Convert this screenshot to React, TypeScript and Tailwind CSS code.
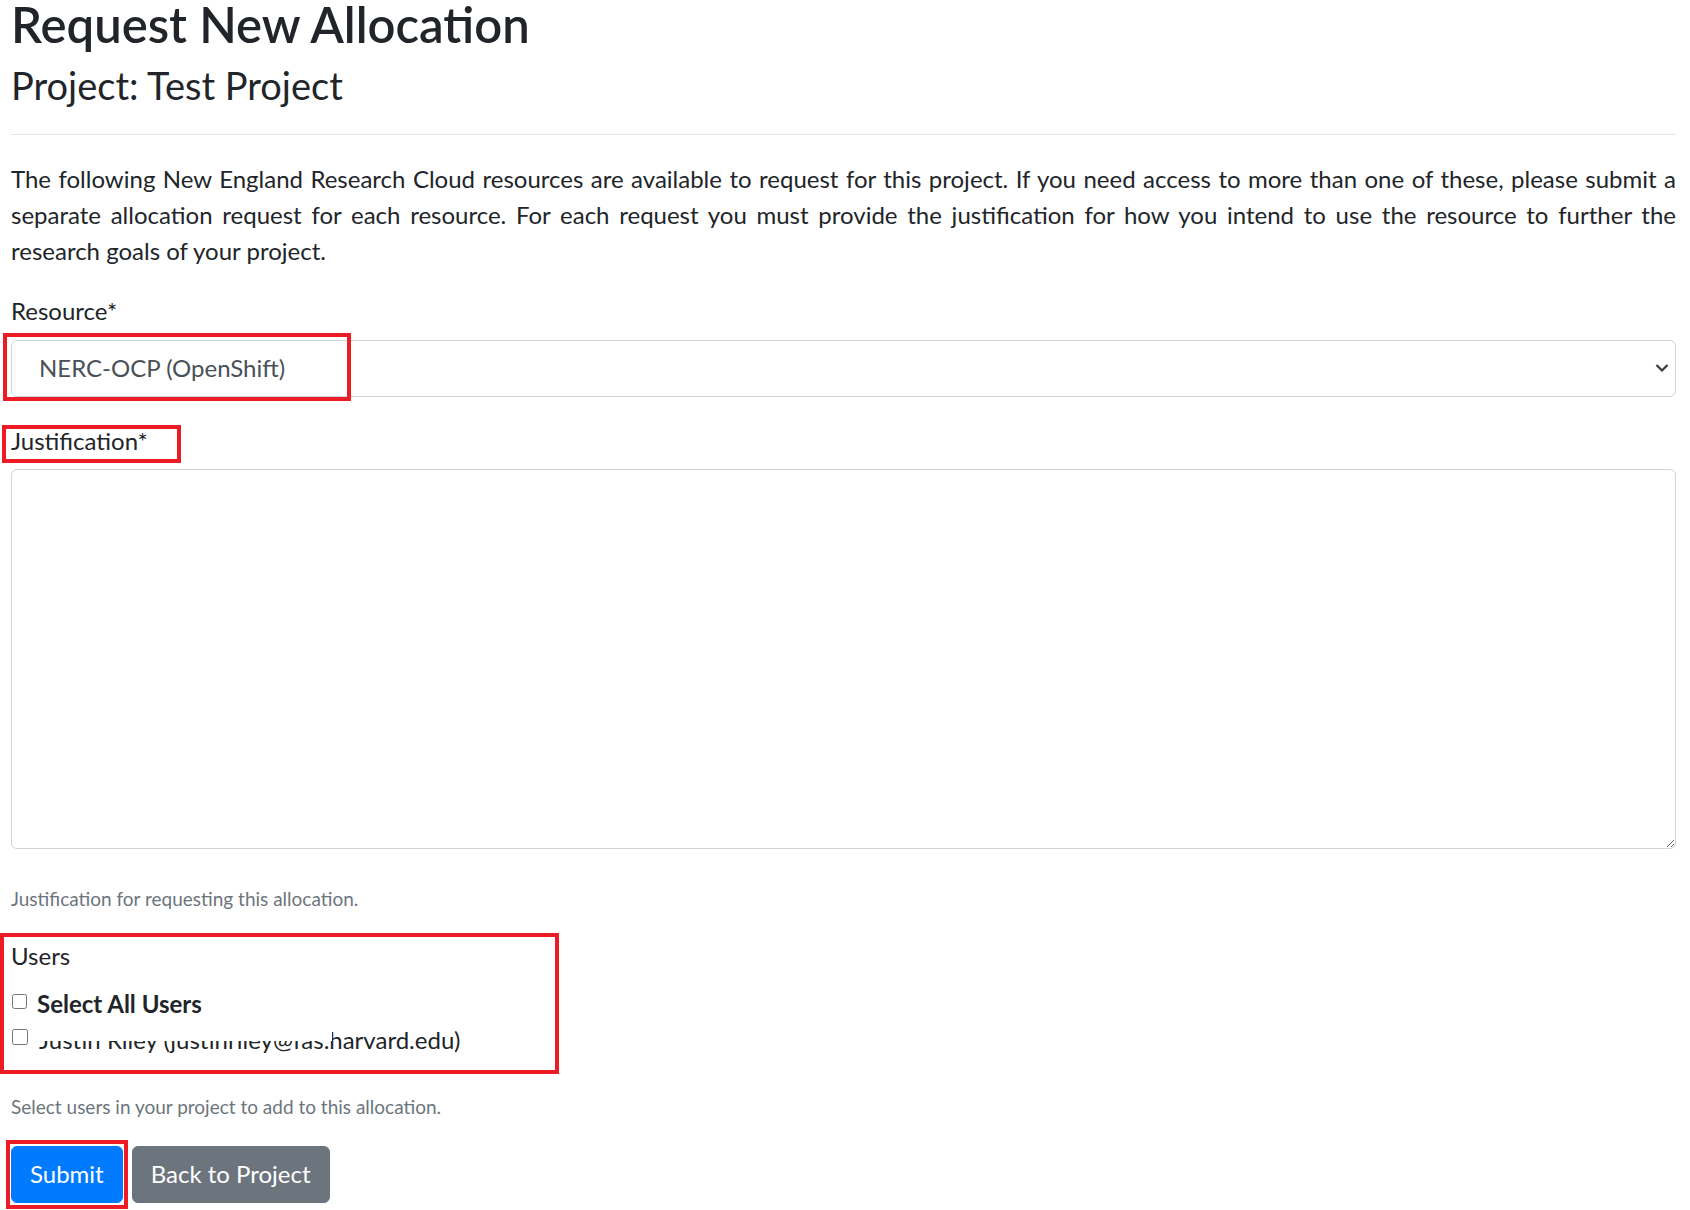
import React from 'react';

const lines = [
  'The following New England Research Cloud resources are available to request for this project. If you need access to more than one of these, please submit a',
  'separate allocation request for each resource. For each request you must provide the justification for how you intend to use the resource to further the',
];

function RedBox({ className }: { className: string }) {
  return <div className={`absolute border-[4px] border-[#ed1c24] pointer-events-none ${className}`} />;
}

export default function App() {
  return (
    <div className="bg-white min-h-[1210px] overflow-hidden pl-[11px] pr-[14px] text-[#212529] font-['Lato','Liberation_Sans',sans-serif]">
      <h2 className="text-[49px] leading-none font-semibold">Request New Allocation</h2>
      <h3 className="text-[38px] leading-[1.2] mt-[14px]">Project: Test Project</h3>
      <hr className="mt-[25px] border-0 border-t border-[#e5e5e5]" />

      <div className="mt-[26px] text-[24px] leading-[36px]">
        {lines.map((l) => (
          <div key={l} className="text-justify [text-align-last:justify]">{l}</div>
        ))}
        <div>research goals of your project.</div>
      </div>

      <div className="mt-[24px] text-[24px] leading-[36px]">
        <div>Resource*</div>
        <div className="relative mt-[11px]">
          <div className="h-[57px] flex items-center pl-[27px] border border-[#ced4da] rounded-[6px] text-[#495057]">
            NERC-OCP (OpenShift)
          </div>
          <svg className="absolute right-[7px] top-[23px]" width="14" height="10" viewBox="0 0 14 10">
            <path d="M1.5 2 L7 7.5 L12.5 2" fill="none" stroke="#343a40" strokeWidth="2.2" />
          </svg>
          <RedBox className="-left-[8px] -top-[7px] w-[348px] h-[68px]" />
        </div>
      </div>

      <div className="mt-[26px] text-[24px] leading-[36px]">
        <div className="relative">
          Justification*
          <RedBox className="-left-[9px] top-[2px] w-[179px] h-[38px]" />
        </div>
        <textarea className="block w-full mt-[10px] h-[380px] border border-[#ced4da] rounded-[6px] resize-y outline-none" />
      </div>

      <div className="mt-[35px] text-[19px] leading-[29px] text-[#6c757d]">Justification for requesting this allocation.</div>

      <div className="relative mt-[25px] text-[24px] leading-[36px]">
        <RedBox className="-left-[11px] -top-[5px] w-[559px] h-[141px]" />
        <div>Users</div>
        <div className="mt-[12px] flex items-center">
          <input type="checkbox" className="w-[15px] h-[15px] m-0 ml-[1px] -mt-[4px]" />
          <span className="ml-[10px] font-bold">Select All Users</span>
        </div>
        <div className="flex items-center">
          <input type="checkbox" className="w-[16px] h-[16px] m-0 ml-[1px] -mt-[5px]" />
          <span className="relative ml-[11px]">
            Justin Riley (justinriley@fas.harvard.edu)
            <span className="absolute left-0 top-0 w-[293px] h-[19px] bg-white" />
          </span>
        </div>
      </div>

      <div className="mt-[34px] text-[19px] leading-[29px] text-[#6c757d]">Select users in your project to add to this allocation.</div>

      <div className="mt-[25px] flex items-center text-[24px] leading-[36px]">
        <div className="relative">
          <button className="h-[57px] px-[18px] rounded-[6px] bg-[#007bff] text-white border border-[#007bff]">Submit</button>
          <RedBox className="-left-[5px] -top-[6px] w-[122px] h-[69px]" />
        </div>
        <button className="ml-[9px] h-[57px] px-[18px] rounded-[6px] bg-[#6c757d] text-white border border-[#6c757d]">Back to Project</button>
      </div>
    </div>
  );
}
